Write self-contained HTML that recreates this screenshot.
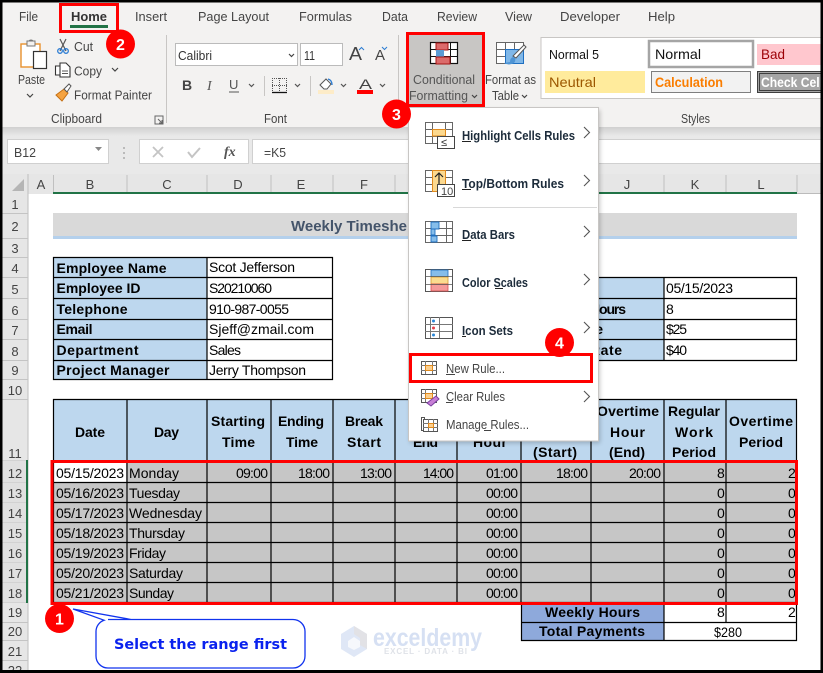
<!DOCTYPE html>
<html><head><meta charset="utf-8"><title>Excel Conditional Formatting</title>
<style>
html,body{margin:0;padding:0;background:#fff}
svg{display:block}
text{font-family:"Liberation Sans",sans-serif;white-space:pre}
.r{font-size:13px;fill:#444}
.t{font-size:13px;fill:#444}
.s{font-size:14px;fill:#000}
.b{font-size:14px;font-weight:bold;fill:#000}
.h{font-size:13px;fill:#444}
.m{font-size:13px;font-weight:bold;fill:#1c2b3a}
.n{font-size:13px;fill:#444}
.c{font-size:16px;font-weight:bold;fill:#fff;text-anchor:middle}
</style></head><body>
<svg width="823" height="673" viewBox="0 0 823 673" xmlns="http://www.w3.org/2000/svg">
<defs>
<linearGradient id="sh" x1="0" y1="0" x2="0" y2="1"><stop offset="0" stop-color="#d0d0d0"/><stop offset="1" stop-color="#e9e9e9"/></linearGradient>
<filter id="ms" x="-10%" y="-10%" width="120%" height="120%"><feGaussianBlur stdDeviation="2.5"/></filter>
</defs>
<rect width="823" height="673" fill="#fff"/>

<!-- ribbon -->
<rect x="0" y="0" width="823" height="127" fill="#f3f2f1"/>
<rect x="0" y="127" width="823" height="9" fill="url(#sh)"/>
<rect x="0" y="136" width="823" height="38" fill="#e9e9e9"/>
<text class="t" x="19" y="21" textLength="19" lengthAdjust="spacingAndGlyphs">File</text>
<text class="t" x="71" y="21" textLength="36" lengthAdjust="spacingAndGlyphs" style="font-weight:bold;fill:#333">Home</text>
<rect x="70" y="25" width="38" height="3" fill="#217346"/>
<text class="t" x="135" y="21" textLength="32" lengthAdjust="spacingAndGlyphs">Insert</text>
<text class="t" x="198" y="21" textLength="71" lengthAdjust="spacingAndGlyphs">Page Layout</text>
<text class="t" x="299" y="21" textLength="53" lengthAdjust="spacingAndGlyphs">Formulas</text>
<text class="t" x="382" y="21" textLength="26" lengthAdjust="spacingAndGlyphs">Data</text>
<text class="t" x="437" y="21" textLength="40" lengthAdjust="spacingAndGlyphs">Review</text>
<text class="t" x="505" y="21" textLength="27" lengthAdjust="spacingAndGlyphs">View</text>
<text class="t" x="560" y="21" textLength="60" lengthAdjust="spacingAndGlyphs">Developer</text>
<text class="t" x="648" y="21" textLength="27" lengthAdjust="spacingAndGlyphs">Help</text>

<!-- clipboard -->
<rect x="21" y="44" width="19" height="23" fill="#fff" stroke="#e8912d" stroke-width="1.4"/>
<rect x="27" y="41" width="8" height="5" fill="#f3f2f1" stroke="#777"/>
<path d="M29 41a2.5 2.5 0 0 1 4 0" fill="none" stroke="#777"/>
<rect x="33.500" y="51.500" width="13" height="17" fill="#fff" stroke="#333" stroke-width="1.2"/>
<text class="r" x="18" y="84" textLength="27" lengthAdjust="spacingAndGlyphs">Paste</text>
<path d="M27 94l3 3 3-3M112 68l3 3 3-3" fill="none" stroke="#444" stroke-width="1.2"/>
<path d="M60 39l6 12M66 39l-6 12" stroke="#555" stroke-width="1.2" fill="none"/>
<circle cx="60" cy="51" r="2.300" fill="none" stroke="#2b7cd3" stroke-width="1.3"/>
<circle cx="66" cy="51" r="2.300" fill="none" stroke="#2b7cd3" stroke-width="1.3"/>
<text class="r" x="74" y="51" textLength="19" lengthAdjust="spacingAndGlyphs">Cut</text>
<path d="M60 66h-4.500v9h4M60 63h6l4 4v10h-10z" fill="#fff" stroke="#333" stroke-width="1.100"/>
<path d="M62 71h6M62 73.500h6" stroke="#555"/>
<text class="r" x="74" y="75.500" textLength="28" lengthAdjust="spacingAndGlyphs">Copy</text>
<path d="M56 95l8-6 4 4-6 8z" fill="#f5a341" stroke="#c56f12"/>
<path d="M64 89l5-5 2 2-4 6z" fill="#fff" stroke="#555"/>
<text class="r" x="74" y="99.500" textLength="78" lengthAdjust="spacingAndGlyphs">Format Painter</text>
<text class="r" x="51" y="123" textLength="51" lengthAdjust="spacingAndGlyphs">Clipboard</text>
<path d="M155 116h8v8h-8zM158 119l4 4M162 120v3h-3" fill="none" stroke="#666"/>
<path d="M166.500 35v88M398.500 35v88" stroke="#c8c6c4"/>

<!-- font -->
<rect x="175.500" y="43.500" width="122" height="22" fill="#fff" stroke="#bbb"/>
<text class="r" x="178" y="60" textLength="34" lengthAdjust="spacingAndGlyphs" style="fill:#333">Calibri</text>
<path d="M289 54l2.500 2.500 2.500-2.500M333 54l2.500 2.500 2.500-2.500" fill="none" stroke="#444" stroke-width="1.200"/>
<rect x="300.500" y="43.500" width="42" height="22" fill="#fff" stroke="#bbb"/>
<text class="r" x="304" y="60" textLength="11" lengthAdjust="spacingAndGlyphs" style="fill:#333">11</text>
<text x="349" y="60" font-size="18" fill="#444" textLength="13" lengthAdjust="spacingAndGlyphs">A</text>
<path d="M359 50l2.500-2.500 2.500 2.500" fill="none" stroke="#2b7cd3"/>
<text x="375" y="60" font-size="14.500" fill="#444" textLength="10" lengthAdjust="spacingAndGlyphs">A</text>
<path d="M382 47l2.500 2.500 2.500-2.500" fill="none" stroke="#2b7cd3"/>
<text x="182" y="90" font-size="14" font-weight="bold" fill="#444">B</text>
<text x="207" y="90" font-size="14" font-style="italic" fill="#555" style="font-family:'Liberation Serif',serif">I</text>
<text x="229" y="89" font-size="13" fill="#555">U</text>
<path d="M229 92h10" stroke="#555"/>
<path d="M249 84l2.500 2.500 2.500-2.500M295 84l2.500 2.500 2.500-2.500M341 84l2.500 2.500 2.500-2.500M380 84l2.500 2.500 2.500-2.500" fill="none" stroke="#555" stroke-width="1.200"/>
<path d="M264.500 76v20M310.500 76v20" stroke="#c8c6c4"/>
<path d="M272 78.500h15M272 85.500h15M279.500 78v15M272.500 78v15M286.500 78v15" stroke="#555" stroke-dasharray="1 1"/>
<path d="M272 92.500h15" stroke="#111" stroke-width="1.300"/>
<path d="M320 85l6-6 5 5-4 5h-3z" fill="#fff" stroke="#555"/>
<path d="M328 79q4 1 4 6" fill="none" stroke="#2b7cd3" stroke-width="1.400"/>
<rect x="318" y="90" width="16" height="4" fill="#fdecc8"/>
<text x="359" y="89" font-size="14" fill="#444" textLength="13" lengthAdjust="spacingAndGlyphs">A</text>
<rect x="357" y="90" width="16" height="4" fill="#f00"/>
<text class="r" x="264" y="123" textLength="23" lengthAdjust="spacingAndGlyphs">Font</text>

<!-- conditional formatting -->
<rect x="407" y="33" width="77" height="73" fill="#c8c6c4"/>
<rect x="430.500" y="42.500" width="27" height="21" fill="#fff" stroke="#111" stroke-width="1.200"/>
<path d="M430 49.500h28M430 56.500h28M436.500 42v21M450.500 42v21" stroke="#111" stroke-width="1"/>
<path d="M436 43h12v7h-12zM436 57h14v7h-14z" fill="#dc6b6b" stroke="#a31515"/>
<rect x="436" y="50" width="8" height="6.500" fill="#5b9bd5"/>
<text class="r" x="413" y="84" textLength="62" lengthAdjust="spacingAndGlyphs" style="fill:#555">Conditional</text>
<text class="r" x="409" y="100" textLength="59" lengthAdjust="spacingAndGlyphs" style="fill:#555">Formatting</text>
<path d="M472 95l2.500 2.500 2.500-2.500M522 95l2.500 2.500 2.500-2.500" fill="none" stroke="#444" stroke-width="1.200"/>
<rect x="407.500" y="33.500" width="76" height="72" fill="none" stroke="#f00" stroke-width="3"/>
<!-- format table -->
<rect x="496.500" y="42.500" width="27" height="21" fill="#fff" stroke="#666"/>
<path d="M496 49.500h28M496 56.500h28M505.500 42v21M514.500 42v21" stroke="#666"/>
<path d="M505.500 49.500h18v14h-18z" fill="#7fb7e8" stroke="#1f6fc0"/>
<path d="M524 45l2 2-10 11-3-2z" fill="#fff" stroke="#555"/>
<path d="M513 57q-3 1-3 5l-6 1q5 3 10 0 2-2 1-5z" fill="#4e94d4"/>
<text class="r" x="485" y="84" textLength="51" lengthAdjust="spacingAndGlyphs">Format as</text>
<text class="r" x="492" y="100" textLength="27" lengthAdjust="spacingAndGlyphs">Table</text>

<!-- styles -->
<rect x="541" y="37.500" width="282" height="61" fill="#fff" stroke="#c8c6c4"/>
<text x="549" y="59" font-size="13" fill="#111" textLength="50" lengthAdjust="spacingAndGlyphs">Normal 5</text>
<rect x="649" y="41" width="104" height="26" fill="#fff" stroke="#a5a5a5" stroke-width="2.500"/>
<text x="655" y="59" font-size="14" fill="#111" textLength="46" lengthAdjust="spacingAndGlyphs">Normal</text>
<rect x="757" y="44" width="66" height="21" fill="#ffc7ce"/>
<text x="761" y="59" font-size="14" fill="#9c0006" textLength="24" lengthAdjust="spacingAndGlyphs">Bad</text>
<rect x="545" y="71" width="100" height="22" fill="#ffeb9c"/>
<text x="549" y="87" font-size="14" fill="#9c5700" textLength="47" lengthAdjust="spacingAndGlyphs">Neutral</text>
<rect x="651.500" y="71.500" width="99" height="21" fill="#f2f2f2" stroke="#7f7f7f"/>
<text x="655" y="87" font-size="14" font-weight="bold" fill="#fa7d00" textLength="68" lengthAdjust="spacingAndGlyphs">Calculation</text>
<rect x="757" y="71" width="66" height="22" fill="#a5a5a5"/>
<path d="M823 71.500h-65.500v21h65.500M823 73.500h-63.500v17h63.500" fill="none" stroke="#3f3f3f"/>
<text x="761" y="87" font-size="14" font-weight="bold" fill="#fff" textLength="62" lengthAdjust="spacingAndGlyphs">Check Cell</text>
<rect x="821" y="37" width="2" height="62" fill="#111"/>
<text class="r" x="681" y="123" textLength="29" lengthAdjust="spacingAndGlyphs">Styles</text>

<!-- formula bar -->
<rect x="7.500" y="139.500" width="101" height="24" fill="#fff" stroke="#d0d0d0"/>
<text class="h" x="14" y="157" textLength="22" lengthAdjust="spacingAndGlyphs">B12</text>
<path d="M95 147h7l-3.500 4z" fill="#888"/>
<path d="M124 147v2M124 152v2M124 157v2" stroke="#aaa" stroke-width="1.500"/>
<rect x="139.500" y="139.500" width="109" height="24" fill="#fff" stroke="#d0d0d0"/>
<path d="M153 147l10 10M163 147l-10 10" stroke="#c4c4c4" stroke-width="1.800"/>
<path d="M188 152l4 5 8-9" fill="none" stroke="#c4c4c4" stroke-width="2"/>
<text x="224" y="156" font-size="14" font-style="italic" font-weight="bold" style="font-family:'Liberation Serif',serif" fill="#555">fx</text>
<rect x="252.500" y="139.500" width="571" height="24" fill="#fff" stroke="#d0d0d0"/>
<text class="h" x="264" y="157" textLength="22" lengthAdjust="spacingAndGlyphs">=K5</text>

<!-- column headers -->
<rect x="0" y="174" width="823" height="20" fill="#e6e6e6"/>
<rect x="0" y="174" width="28" height="499" fill="#e6e6e6"/>
<path d="M12 191l12-12v12z" fill="#b5b5b5"/>
<path d="M28 174v499" stroke="#bdbdbd" stroke-width="1"/>
<path d="M53.500 175v17M127 175v17M207 175v17M271 175v17M333 175v17M395 175v17M457 175v17M521 175v17M591 175v17M664 175v17M726 175v17M797 175v17" stroke="#c0c0c0"/>
<path d="M797 193.500h26" stroke="#bbb"/>
<rect x="53" y="192" width="744" height="2" fill="#217346"/>
<g class="h" style="font-size:13px;fill:#444" text-anchor="middle">
<text x="41" y="189">A</text><text x="90" y="189">B</text><text x="167" y="189">C</text><text x="238" y="189">D</text><text x="301" y="189">E</text><text x="364" y="189">F</text><text x="627" y="189">J</text><text x="695" y="189">K</text><text x="761" y="189">L</text>
</g>
<!-- row headers -->
<path d="M2 213.500h26M2 238.500h26M2 257.500h26M2 277.500h26M2 298.500h26M2 319.500h26M2 339.500h26M2 360.500h26M2 379.500h26M2 399.500h26M2 460.500h26M2 482.500h26M2 502.500h26M2 522.500h26M2 542.500h26M2 562.500h26M2 582.500h26M2 602.500h26M2 622.500h26M2 640.500h26M2 660.500h26" stroke="#c4c4c4"/>
<rect x="2" y="460" width="24" height="143" fill="#dcdcdc" opacity=".6"/>
<rect x="26" y="460" width="2" height="143" fill="#217346"/>
<g style="font-size:13px;fill:#444" text-anchor="middle">
<text x="15" y="209">1</text><text x="15" y="231">2</text><text x="15" y="253">3</text><text x="15" y="273">4</text><text x="15" y="294">5</text><text x="15" y="315">6</text><text x="15" y="335">7</text><text x="15" y="356">8</text><text x="15" y="375">9</text><text x="15" y="395">10</text><text x="15" y="458">11</text><text x="15" y="478">12</text><text x="15" y="498">13</text><text x="15" y="518">14</text><text x="15" y="538">15</text><text x="15" y="558">16</text><text x="15" y="578">17</text><text x="15" y="598">18</text><text x="15" y="617">19</text><text x="15" y="636">20</text><text x="15" y="656">21</text><text x="15" y="675">22</text>
</g>

<!-- title -->
<rect x="53" y="213" width="744" height="23" fill="#d9d9d9"/>
<rect x="53" y="236" width="744" height="3" fill="#b4d0ec"/>
<text x="291" y="231" font-size="15" font-weight="bold" fill="#44546a" textLength="116">Weekly Timeshe</text>

<!-- info table left -->
<rect x="53" y="257" width="154" height="122" fill="#bdd7ee"/>
<path d="M53.500 257.500h279v122h-279zM207 257v122M53 277.500h280M53 298.500h280M53 319.500h280M53 339.500h280M53 360.500h280" fill="none" stroke="#000" stroke-width="1.200"/>
<text class="b" x="56.500" y="273" textLength="110">Employee Name</text>
<text class="b" x="56.500" y="293" textLength="84">Employee ID</text>
<text class="b" x="56.500" y="314" textLength="71">Telephone</text>
<text class="b" x="56.500" y="334" textLength="36">Email</text>
<text class="b" x="56.500" y="355" textLength="82">Department</text>
<text class="b" x="56.500" y="375" textLength="113">Project Manager</text>
<text class="s" x="209" y="272" textLength="86">Scot Jefferson</text>
<text class="s" x="209" y="293" textLength="63">S20210060</text>
<text class="s" x="209" y="314" textLength="80">910-987-0055</text>
<text class="s" x="209" y="334" textLength="105">Sjeff@zmail.com</text>
<text class="s" x="209" y="355" textLength="32">Sales</text>
<text class="s" x="209" y="375" textLength="97">Jerry Thompson</text>

<!-- info table right -->
<rect x="540" y="277" width="124" height="83" fill="#bdd7ee"/>
<path d="M540 277.500h256.500v83h-256.500M664 277v83M540 298.500h257M540 319.500h257M540 339.500h257" fill="none" stroke="#000" stroke-width="1.200"/>
<text class="b" x="590" y="314" textLength="36">Hours</text>
<text class="b" x="570" y="334" textLength="33">Rate</text>
<text class="b" x="590" y="355" textLength="32">Rate</text>
<text class="s" x="666" y="293" textLength="67">05/15/2023</text>
<text class="s" x="666" y="314">8</text>
<text class="s" x="666" y="334" textLength="21">$25</text>
<text class="s" x="666" y="355" textLength="21">$40</text>

<!-- main table -->
<rect x="53" y="399" width="744" height="61" fill="#bdd7ee"/>
<rect x="53" y="460" width="744" height="143" fill="#c6c6c6"/>
<rect x="54" y="463" width="72" height="19" fill="#fff"/>
<path d="M53.500 399.500h743v203h-743zM127 399v204M207 399v204M271 399v204M333 399v204M395 399v204M457 399v204M521 399v204M591 399v204M664 399v204M726 399v204M53 482.500h744M53 502.500h744M53 522.500h744M53 542.500h744M53 562.500h744M53 582.500h744" fill="none" stroke="#000" stroke-width="1.200"/>
<text class="b" x="75" y="437" textLength="30">Date</text>
<text class="b" x="154" y="437" textLength="25">Day</text>
<text class="b" x="211" y="426" textLength="54">Starting</text>
<text class="b" x="222" y="447" textLength="33">Time</text>
<text class="b" x="278" y="426" textLength="46">Ending</text>
<text class="b" x="286" y="447" textLength="32">Time</text>
<text class="b" x="345" y="426" textLength="38">Break</text>
<text class="b" x="347" y="447" textLength="34">Start</text>
<text class="b" x="413" y="447" textLength="25">End</text>
<text class="b" x="473" y="447" textLength="34">Hour</text>
<text class="b" x="533" y="457" textLength="44">(Start)</text>
<text class="b" x="597" y="416" textLength="62">Overtime</text>
<text class="b" x="610" y="437" textLength="35">Hour</text>
<text class="b" x="609" y="457" textLength="36">(End)</text>
<text class="b" x="668" y="416" textLength="52">Regular</text>
<text class="b" x="675" y="437" textLength="38">Work</text>
<text class="b" x="672" y="457" textLength="44">Period</text>
<text class="b" x="729" y="426" textLength="64">Overtime</text>
<text class="b" x="739" y="447" textLength="44">Period</text>

<g class="s" style="font-size:14px">
<text x="56" y="478" textLength="68">05/15/2023</text><text x="56" y="498" textLength="68">05/16/2023</text><text x="56" y="518" textLength="68">05/17/2023</text><text x="56" y="538" textLength="68">05/18/2023</text><text x="56" y="558" textLength="68">05/19/2023</text><text x="56" y="578" textLength="68">05/20/2023</text><text x="56" y="598" textLength="68">05/21/2023</text>
<text x="129" y="478" textLength="50">Monday</text><text x="129" y="498" textLength="51">Tuesday</text><text x="129" y="518" textLength="73">Wednesday</text><text x="129" y="538" textLength="56">Thursday</text><text x="129" y="558" textLength="37">Friday</text><text x="129" y="578" textLength="54">Saturday</text><text x="129" y="598" textLength="45">Sunday</text>
<text x="236" y="478" textLength="32">09:00</text><text x="298" y="478" textLength="32">18:00</text><text x="360" y="478" textLength="32">13:00</text><text x="423" y="478" textLength="31">14:00</text>
<text x="486" y="478" textLength="32">01:00</text><text x="486" y="498" textLength="32">00:00</text><text x="486" y="518" textLength="32">00:00</text><text x="486" y="538" textLength="32">00:00</text><text x="486" y="558" textLength="32">00:00</text><text x="486" y="578" textLength="32">00:00</text><text x="486" y="598" textLength="32">00:00</text>
<text x="556" y="478" textLength="32">18:00</text><text x="629" y="478" textLength="32">20:00</text>
<text x="717" y="478">8</text><text x="717" y="498">0</text><text x="717" y="518">0</text><text x="717" y="538">0</text><text x="717" y="558">0</text><text x="717" y="578">0</text><text x="717" y="598">0</text>
<text x="788" y="478">2</text><text x="788" y="498">0</text><text x="788" y="518">0</text><text x="788" y="538">0</text><text x="788" y="558">0</text><text x="788" y="578">0</text><text x="788" y="598">0</text>
</g>

<!-- totals -->
<rect x="521" y="603" width="143" height="37" fill="#8ea9db"/>
<path d="M521.500 603v37.500h275v-37.500M664 603v37M726 603v19M521 622.500h276" fill="none" stroke="#000" stroke-width="1.200"/>
<text class="b" x="545" y="617" textLength="95">Weekly Hours</text>
<text class="b" x="539" y="636" textLength="106">Total Payments</text>
<text class="s" x="717" y="617">8</text><text class="s" x="788" y="617">2</text>
<text class="s" x="714" y="637" textLength="28" lengthAdjust="spacingAndGlyphs">$280</text>

<!-- selection box -->
<rect x="52" y="461.500" width="744.500" height="142" fill="none" stroke="#f00" stroke-width="3"/>

<!-- watermark -->
<path d="M354 626l13 8v15l-13 8-13-8v-15z" fill="#dfe7f6"/>
<path d="M354 626l13 8v15l-7-4v-7l-6-4z" fill="#e2e2e6"/>
<path d="M348 641l6-4 6 4v6l-6 3-6-3z" fill="#fff" opacity=".7"/>
<text x="373" y="646" font-size="25" font-weight="bold" fill="#d6e0f3" textLength="109" lengthAdjust="spacingAndGlyphs">exceldemy</text>
<text x="384" y="654" font-size="8" font-weight="bold" fill="#dfe2e8" textLength="83">EXCEL · DATA · BI</text>

<!-- callout -->
<path d="M108 619.500h185a12 12 0 0 1 12 12v24.500a12 12 0 0 1-12 12h-185a12 12 0 0 1-12-12v-24.500a12 12 0 0 1 8-11.300l-31-11.200 58 10.500" fill="#fff" stroke="#1133ee" stroke-width="1.300"/>
<text x="114" y="649" font-size="14" font-weight="bold" style="font-family:'DejaVu Sans',sans-serif" fill="#0a22ee" textLength="173" lengthAdjust="spacingAndGlyphs">Select the range first</text>

<!-- red home box -->
<rect x="60.500" y="4.500" width="57" height="27" fill="none" stroke="#f00" stroke-width="3"/>

<!-- menu -->
<rect x="410" y="110" width="190" height="333" fill="#000" opacity=".22" filter="url(#ms)"/>
<rect x="408.500" y="107.500" width="190" height="333.500" fill="#fff" stroke="#c8c6c4"/>
<path d="M453 207.500h144" stroke="#d8d8d8"/>

<!-- highlight icon -->
<rect x="425.500" y="122.500" width="27" height="21" fill="#fff" stroke="#666"/>
<path d="M425 129.500h28M425 136.500h28M432.500 122v21M445.500 122v21" stroke="#666"/>
<path d="M432.500 136v-6.500h13v6.500z" fill="#fcd98f" stroke="#e08a1e"/>
<rect x="437.500" y="136.500" width="17" height="12" fill="#fff" stroke="#444"/>
<text x="441" y="146" font-size="11" fill="#333">≤</text>
<text class="m" x="462" y="140" textLength="113" lengthAdjust="spacingAndGlyphs">Highlight Cells Rules</text>
<path d="M584 127l5.500 5.500-5.500 5.500" fill="none" stroke="#555" stroke-width="1.100"/>
<path d="M462 141.500h9M462 189.500h9M462 240.500h9M495 288.500h8M462 336.500h4" stroke="#222"/>

<!-- top bottom icon -->
<rect x="425.500" y="170.500" width="27" height="21" fill="#fff" stroke="#666"/>
<path d="M425 177.500h28M425 184.500h28M445.500 170v21" stroke="#666"/>
<rect x="432.500" y="170.500" width="13" height="21" fill="#fcd98f" stroke="#e08a1e"/>
<path d="M439 184v-11M435 177l4-4 4 4" fill="none" stroke="#222" stroke-width="1.200"/>
<rect x="437.500" y="184.500" width="17" height="12" fill="#fff" stroke="#444"/>
<text x="441" y="195" font-size="11" fill="#444">10</text>
<text class="m" x="462" y="188" textLength="102" lengthAdjust="spacingAndGlyphs">Top/Bottom Rules</text>
<path d="M584 175l5.500 5.500-5.500 5.500" fill="none" stroke="#555" stroke-width="1.100"/>

<!-- data bars icon -->
<rect x="425.500" y="221.500" width="27" height="21" fill="#fff" stroke="#666"/>
<path d="M425 228.500h28M425 235.500h28M431.500 221v21M446.500 221v21" stroke="#666"/>
<path d="M431 222h8v7h-8zM431 229h4v6h-4zM431 236h6v6h-6z" fill="#85bdea" stroke="#1f6fc0" stroke-width=".9"/>
<text class="m" x="462" y="239" textLength="53" lengthAdjust="spacingAndGlyphs">Data Bars</text>
<path d="M584 226l5.500 5.500-5.500 5.500" fill="none" stroke="#555" stroke-width="1.100"/>

<!-- color scales -->
<rect x="425.500" y="269.500" width="27" height="22" fill="#fff" stroke="#555"/>
<rect x="431" y="270" width="17" height="7" fill="#85bdea" stroke="#1f6fc0" stroke-width=".8"/>
<rect x="431" y="277" width="17" height="7" fill="#fbdc8f" stroke="#d69a2d" stroke-width=".8"/>
<rect x="431" y="284" width="17" height="7" fill="#f59a9a" stroke="#d85050" stroke-width=".8"/>
<path d="M425 276.500h28M425 284.500h28" stroke="#555" stroke-width=".8"/>
<text class="m" x="462" y="287" textLength="66" lengthAdjust="spacingAndGlyphs">Color Scales</text>
<path d="M584 274l5.500 5.500-5.500 5.500" fill="none" stroke="#555" stroke-width="1.100"/>

<!-- icon sets -->
<rect x="425.500" y="317.500" width="27" height="21" fill="#fff" stroke="#555"/>
<path d="M425 324.500h28M425 331.500h28M430.500 317v21M439.500 317v21" stroke="#777"/>
<circle cx="433.500" cy="321" r="1.500" fill="#2b88d8"/><circle cx="433.500" cy="328" r="1.500" fill="#e8404a"/><circle cx="433.500" cy="335" r="1.500" fill="#2b88d8"/>
<text class="m" x="462" y="335" textLength="51" lengthAdjust="spacingAndGlyphs">Icon Sets</text>
<path d="M584 322l5.500 5.500-5.500 5.500" fill="none" stroke="#555" stroke-width="1.100"/>

<!-- new rule -->
<rect x="421.500" y="361.500" width="15" height="13" fill="#fff" stroke="#555"/>
<path d="M421 365.500h16M421 370.500h16M425.500 361v13M432.500 361v13" stroke="#777"/>
<rect x="425.500" y="365.500" width="7" height="5" fill="#fcd08f" stroke="#e08a1e"/>
<text class="n" x="446" y="373" textLength="59" lengthAdjust="spacingAndGlyphs">New Rule...</text>
<path d="M446 374.500h9" stroke="#444"/>
<rect x="410.500" y="354.500" width="181" height="27" fill="none" stroke="#f00" stroke-width="3"/>

<!-- clear rules -->
<rect x="421.500" y="389.500" width="15" height="13" fill="#fff" stroke="#555"/>
<path d="M421 393.500h16M421 398.500h16M425.500 389v13M432.500 389v13" stroke="#777"/>
<rect x="425.500" y="393.500" width="7" height="5" fill="#fcd08f" stroke="#e08a1e"/>
<path d="M427 403l9-7 3 3-8 7z" fill="#c77fd6" stroke="#7a3fa0"/>
<text class="n" x="446" y="401" textLength="59" lengthAdjust="spacingAndGlyphs">Clear Rules</text>
<path d="M446 402.500h7" stroke="#444"/>
<path d="M584 391l5.500 5.500-5.500 5.500" fill="none" stroke="#555" stroke-width="1.100"/>

<!-- manage rules -->
<rect x="421.500" y="417.500" width="3" height="13" fill="#fff" stroke="#555"/>
<rect x="423.500" y="419.500" width="14" height="12" fill="#fff" stroke="#555"/>
<path d="M423 423.500h15M423 427.500h15M428.500 419v12M433.500 419v12" stroke="#777"/>
<rect x="428.500" y="423.500" width="5" height="4" fill="#fcd08f" stroke="#e08a1e"/>
<text class="n" x="446" y="429" textLength="83" lengthAdjust="spacingAndGlyphs">Manage Rules...</text>
<path d="M484 430.500h7" stroke="#444"/>

<!-- badges -->
<circle cx="120.500" cy="44" r="14.500" fill="#f00"/><text class="c" x="120.500" y="50">2</text>
<circle cx="396.500" cy="114" r="14.500" fill="#f00"/><text class="c" x="396.500" y="120">3</text>
<circle cx="559.500" cy="342.500" r="14.500" fill="#f00"/><text class="c" x="559.500" y="348.500">4</text>
<circle cx="59.500" cy="618.500" r="14.500" fill="#f00"/><text class="c" x="59.500" y="624.500">1</text>

<!-- frame -->
<path d="M0 1h823M1 0v673M822 0v673M0 671.500h823" stroke="#000" stroke-width="3" fill="none"/>
</svg>
</body></html>
